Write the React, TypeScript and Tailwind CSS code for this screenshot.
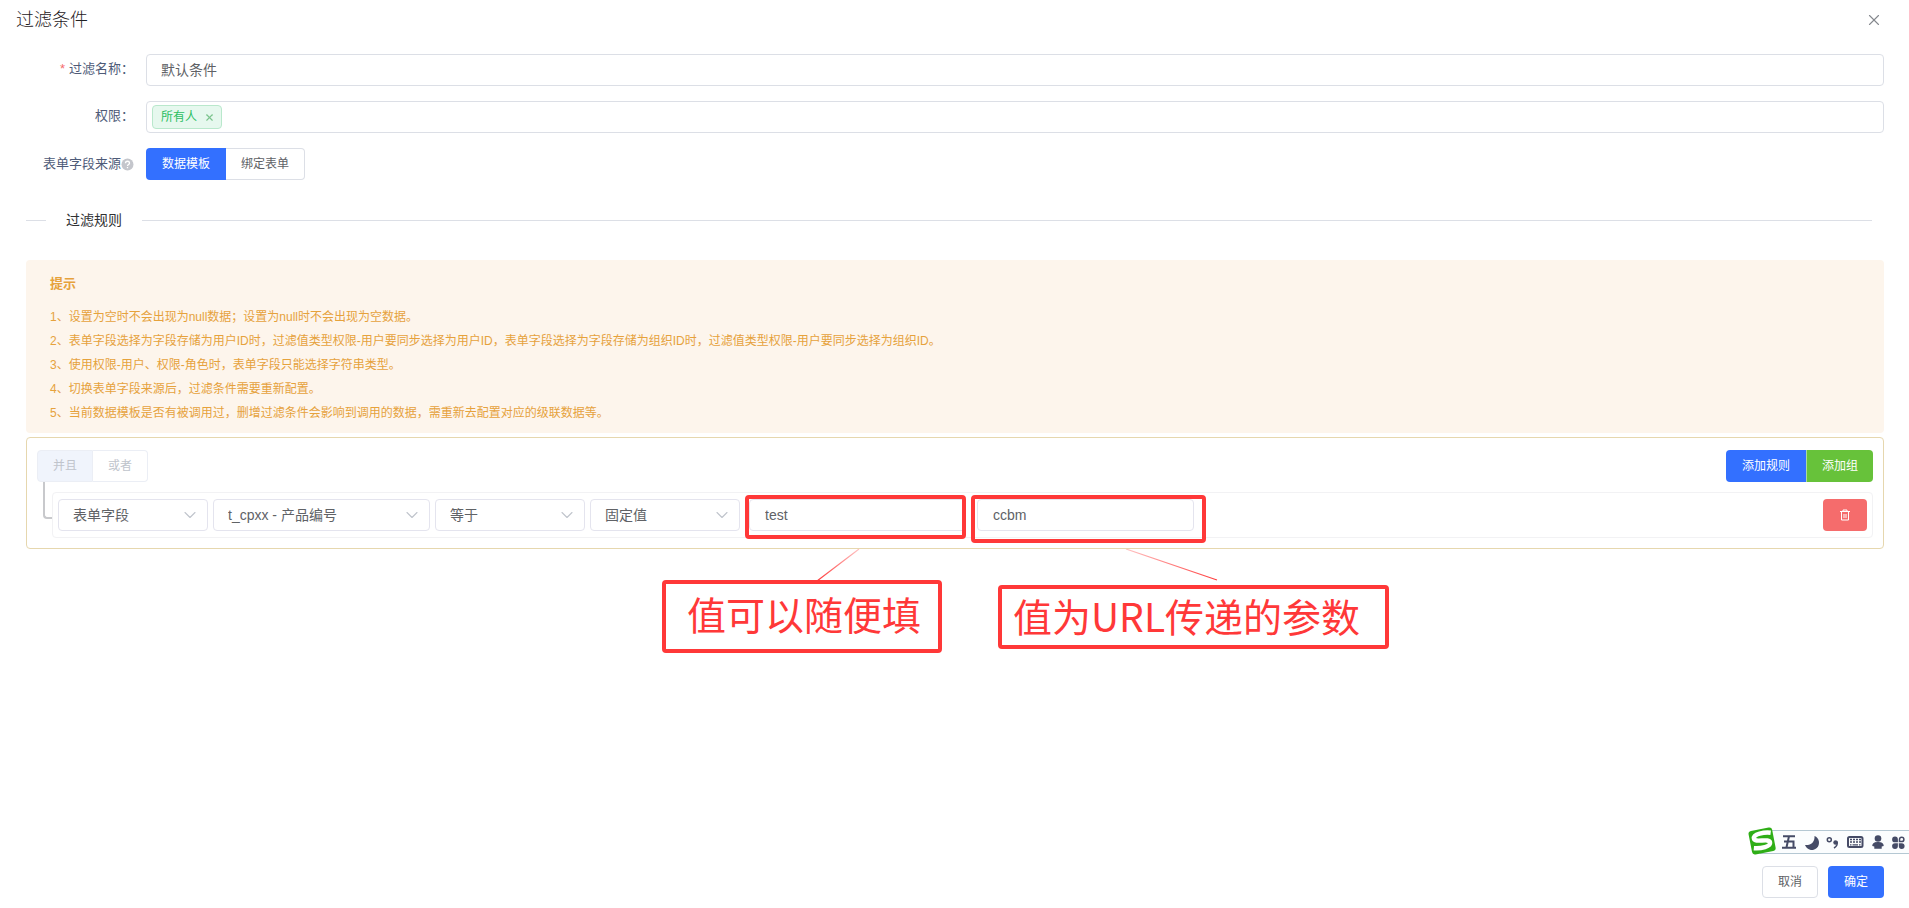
import React, { useState } from 'react';
import { ChevronDown, X } from 'lucide-react';

const TIPS = [
  '1、设置为空时不会出现为null数据；设置为null时不会出现为空数据。',
  '2、表单字段选择为字段存储为用户ID时，过滤值类型权限-用户要同步选择为用户ID，表单字段选择为字段存储为组织ID时，过滤值类型权限-用户要同步选择为组织ID。',
  '3、使用权限-用户、权限-角色时，表单字段只能选择字符串类型。',
  '4、切换表单字段来源后，过滤条件需要重新配置。',
  '5、当前数据模板是否有被调用过，删增过滤条件会影响到调用的数据，需重新去配置对应的级联数据等。',
];

interface RuleSelectProps {
  label: string;
  value: string;
  className: string;
}

const RuleSelect: React.FC<RuleSelectProps> = ({ label, value, className }) => (
  <div className={`relative ${className}`}>
    <select
      aria-label={label}
      className="h-8 w-full appearance-none rounded border border-[#e4e4ee] bg-white pl-3.5 pr-8 text-sm text-[#606266] outline-none"
    >
      <option>{value}</option>
    </select>
    <ChevronDown size={20} strokeWidth={1.3} className="pointer-events-none absolute right-2 top-1.5 text-[#c0c4cc]" />
  </div>
);

const ImeBar: React.FC = () => (
  <svg width="161" height="32" viewBox="0 0 161 32" aria-hidden="true">
    <rect x="12" y="6.5" width="160" height="23" fill="#fbfdfe" stroke="#b5c8d3" />
    <g transform="rotate(-11 14 16.5)">
      <rect x="2" y="5" width="24" height="24" rx="3" fill="#2fae17" />
      <path d="M24 10.500C18 8.500 6.500 8.500 6.500 13c0 5 15 2 15 7 0 4-10 4.500-17 2.500" fill="none" stroke="#fff" strokeWidth="4.500" />
    </g>
    <path d="M35 12.300h12M34 23.700h14M41 12.300l-2.500 11M36 17.500h9.500v6" fill="none" stroke="#454b66" strokeWidth="2" />
    <path d="M66.500 12a7.200 7.200 0 1 1-9.500 9c6 .5 10-3 9.500-9z" fill="#454b66" />
    <circle cx="81.300" cy="15.700" r="2" fill="none" stroke="#454b66" strokeWidth="1.500" />
    <circle cx="87.500" cy="18.500" r="2.200" fill="#454b66" />
    <path d="M89 17.500c1 3-.5 5-3 6.500" fill="none" stroke="#454b66" strokeWidth="1.500" />
    <rect x="100" y="13" width="14.500" height="10" rx="1.500" fill="none" stroke="#454b66" strokeWidth="2" />
    <path d="M102 15.500h11M102 18h11" stroke="#454b66" strokeWidth="1.500" strokeDasharray="2 1" />
    <path d="M102 20.800h1.500M104.500 20.800h5.500M111 20.800h1.500" stroke="#454b66" strokeWidth="1.200" />
    <circle cx="130" cy="14.500" r="3.300" fill="#454b66" />
    <path d="M124.300 22c0-3.500 3-4 5.700-4s5.700.5 5.700 4l-2 .5v2.300h-7.400v-2.300z" fill="#454b66" />
    <g fill="#454b66">
      <path d="M147 12.500a2.900 2.900 0 0 1 2.900 2.900v2.900h-2.900a2.900 2.900 0 0 1 0-5.800z" />
      <path d="M147 25a2.900 2.900 0 0 0 2.900-2.900v-2.900h-2.900a2.900 2.900 0 0 0 0 5.800z" />
      <path d="M153.700 25a2.900 2.900 0 0 1-2.900-2.900v-2.900h2.900a2.900 2.900 0 0 1 0 5.800z" />
    </g>
    <path d="M151.500 17.500v-2.100a2.200 2.200 0 1 1 2.200 2.200z" fill="none" stroke="#454b66" strokeWidth="1.500" />
  </svg>
);

const App: React.FC = () => {
  const [name, setName] = useState('默认条件');
  const [paramName, setParamName] = useState('test');
  const [paramValue, setParamValue] = useState('ccbm');

  return (
    <div className="relative flex min-h-screen flex-col bg-white font-['Liberation_Sans','Noto_Sans_CJK_SC',sans-serif] text-[#606266]">
      {/* Header */}
      <header className="flex h-10 items-center justify-between px-4">
        <h1 className="text-lg font-light leading-6 text-[#1f2023]">过滤条件</h1>
        <button type="button" aria-label="关闭" className="mr-2.5 text-[#85888e]">
          <X size={18} strokeWidth={1.5} />
        </button>
      </header>

      {/* Form */}
      <form className="flex flex-col gap-[15px] pl-[26px] pr-[25px] pt-3.5">
        <div className="flex">
          <label htmlFor="filter-name" className="w-[120px] shrink-0 pr-3 text-right text-[13px] leading-[30px] text-[#4e5b78]">
            <span className="mr-1 text-[#f56c6c]">*</span>过滤名称：
          </label>
          <input
            id="filter-name"
            value={name}
            onChange={(e) => setName(e.target.value)}
            className="h-8 min-w-0 flex-1 rounded border border-[#dcdfe6] px-3.5 pb-0.5 text-sm outline-none"
          />
        </div>
        <div className="flex">
          <span className="w-[120px] shrink-0 pr-3 text-right text-[13px] leading-[30px] text-[#4e5b78]">权限：</span>
          <div className="flex h-8 min-w-0 flex-1 items-center rounded border border-[#dcdfe6] px-[5px]">
            <span className="flex h-6 items-center rounded border border-[#b9e8cc] bg-[#e6f8ee] pl-2 pr-1.5 text-xs text-[#2bbf62]">
              所有人
              <button type="button" aria-label="移除所有人" className="ml-[7px] text-[#7cc48e]">
                <X size={11} strokeWidth={2.5} />
              </button>
            </span>
          </div>
        </div>
        <div className="flex">
          <div className="flex w-[120px] shrink-0 items-center justify-end pr-3 text-[13px] leading-8 text-[#4e5b78]">
            表单字段来源
            <svg width="13" height="13" viewBox="0 0 13 13" aria-hidden="true">
              <circle cx="6.5" cy="6.5" r="6" fill="#c4c6cc" />
              <path d="M4.500 5.200c0-2.600 4-2.600 4 0 0 1.300-2 1.400-2 2.800M6.500 9v1.300" fill="none" stroke="#fff" strokeWidth="1.300" />
            </svg>
          </div>
          <div className="flex text-xs">
            <button type="button" className="h-8 rounded-l bg-[#3370ff] px-4 text-white">数据模板</button>
            <button type="button" className="h-8 rounded-r border border-l-0 border-[#dcdfe6] px-[15px]">绑定表单</button>
          </div>
        </div>
      </form>

      <main className="pl-[26px] pr-[25px]">
        {/* Section title */}
        <div className="mr-3 mt-[30px] flex items-center gap-5">
          <span className="h-px w-5 bg-[#dcdfe6]" />
          <h2 className="text-sm text-[#303133]">过滤规则</h2>
          <span className="h-px flex-1 bg-[#dcdfe6]" />
        </div>

        {/* Tips */}
        <section className="mt-[30px] rounded bg-[#fdf5ec] px-6 pb-2 pt-3 text-xs leading-6 text-[#e6a23c]">
          <h3 className="mb-[9px] text-[13px] font-bold leading-6">提示</h3>
          {TIPS.map((tip) => (
            <p key={tip}>{tip}</p>
          ))}
        </section>

        {/* Rule group */}
        <section className="mt-1 rounded border border-[#e6d7ae] px-2.5 pb-2.5 pt-3">
          <div className="flex justify-between text-xs">
            <div className="flex">
              <button type="button" disabled className="h-8 rounded-l border border-[#ebeef5] bg-[#f0f4fc] px-[15px] text-[#c0c4cc]">并且</button>
              <button type="button" disabled className="h-8 rounded-r border border-l-0 border-[#ebeef5] px-[15px] text-[#c0c4cc]">或者</button>
            </div>
            <div className="flex text-white">
              <button type="button" className="h-8 rounded-l bg-[#3370ff] px-4">添加规则</button>
              <button type="button" className="h-8 rounded-r border-l border-[#a9d9a0] bg-[#67c23a] px-[15px]">添加组</button>
            </div>
          </div>

          <div className="flex">
            <span className="ml-1.5 h-[37px] w-2.5 shrink-0 rounded-bl border-b-2 border-l-2 border-[#c8c9cc]" />
            <div className="relative -ml-px mt-2.5 flex min-w-0 flex-1 items-center gap-[5px] rounded border border-[#f2f2f4] px-[5px] py-1.5">
              <RuleSelect label="字段类型" value="表单字段" className="w-[150px]" />
              <RuleSelect label="字段" value="t_cpxx - 产品编号" className="w-[217px]" />
              <RuleSelect label="运算符" value="等于" className="w-[150px]" />
              <RuleSelect label="值类型" value="固定值" className="w-[150px]" />
              <div className="relative ml-1">
                <input
                  aria-label="值"
                  value={paramName}
                  onChange={(e) => setParamName(e.target.value)}
                  className="h-8 w-[217px] rounded border border-[#e4e4ee] px-[15px] text-sm outline-none"
                />
                <span className="pointer-events-none absolute -bottom-2 -left-1 -right-0 -top-1 rounded-sm border-4 border-[#ff3838]" />
              </div>
              <div className="relative ml-1.5">
                <input
                  aria-label="参数"
                  value={paramValue}
                  onChange={(e) => setParamValue(e.target.value)}
                  className="h-8 w-[217px] rounded border border-[#e4e4ee] px-[15px] text-sm outline-none"
                />
                <span className="pointer-events-none absolute -bottom-3 -left-1.5 -right-3 -top-1 rounded-sm border-4 border-[#ff3838]" />
              </div>
              <button type="button" aria-label="删除" className="ml-auto flex h-8 w-11 items-center justify-center rounded bg-[#f56c6c] text-white">
                <svg width="12" height="12" viewBox="0 0 12 12" fill="none" stroke="currentColor" aria-hidden="true">
                  <path d="M1 2.500h10M4 2.500v-1.500h4v1.500M2.500 2.500v8.500h7v-8.500M5 5v4M7 5v4" />
                </svg>
              </button>
            </div>
          </div>
        </section>
      </main>

      {/* Annotations */}
      <svg className="pointer-events-none absolute left-[810px] top-[549px]" width="420" height="34" viewBox="0 0 420 34" aria-hidden="true">
        <defs>
          <linearGradient id="fade" x1="0" y1="0" x2="0" y2="1">
            <stop offset="0" stopColor="#ff3838" stopOpacity="0.3" />
            <stop offset="1" stopColor="#ff3838" />
          </linearGradient>
        </defs>
        <path d="M49 0L7 32M316 0L407 31" fill="none" stroke="url(#fade)" strokeWidth="1.2" />
      </svg>
      <div className="absolute left-[662px] top-[580px] flex h-[73px] w-[280px] items-center justify-center rounded-sm border-4 border-[#ff3838] bg-white pb-1.5 pl-1 font-['Noto_Sans_CJK_SC',sans-serif] text-[39px] text-[#ff3838]">
        值可以随便填
      </div>
      <div className="absolute left-[998px] top-[585px] flex h-16 w-[391px] items-center rounded-sm border-4 border-[#ff3838] bg-white pb-1 pl-[11px] font-['Noto_Sans_CJK_SC',sans-serif] text-[39px] text-[#ff3838]">
        值为URL传递的参数
      </div>

      {/* Footer */}
      <footer className="mt-auto flex justify-end gap-2.5 pb-2.5 pr-[25px] text-xs">
        <button type="button" className="h-8 rounded border border-[#dcdfe6] px-[15px]">取消</button>
        <button type="button" className="h-8 rounded bg-[#3370ff] px-4 text-white">确定</button>
      </footer>

      <div className="absolute bottom-[52px] right-0">
        <ImeBar />
      </div>
    </div>
  );
};

export default App;
